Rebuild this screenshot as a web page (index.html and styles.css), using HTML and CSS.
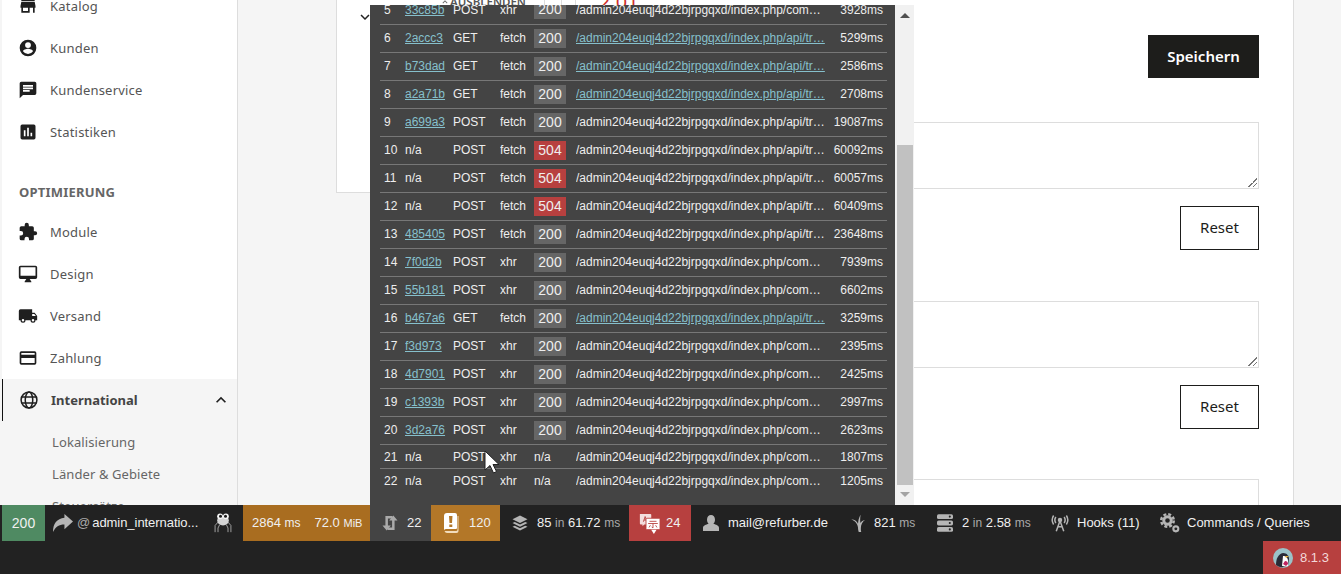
FILE: index.html
```html
<!DOCTYPE html>
<html lang="de">
<head>
<meta charset="utf-8">
<title>Lokalisierung</title>
<link rel="stylesheet" href="styles.css">
</head>
<body>
<div class="layout">
  <aside class="sidebar">
    <ul class="menu">
      <li class="item"><svg class="ic" viewBox="0 0 24 24"><path d="M4 4h16v2H4zM20 7H4l-1 5v2h1v6h10v-6h4v6h2v-6h1v-2zM12 18H6v-4h6z"/></svg>Katalog</li>
      <li class="item"><svg class="ic" viewBox="0 0 24 24"><path d="M12 2a10 10 0 1 0 0 20 10 10 0 0 0 0-20zm0 3a3.500 3.500 0 1 1 0 7 3.500 3.500 0 0 1 0-7zm0 14.200a7.200 7.200 0 0 1-6-3.200c0-2 4-3.100 6-3.100s6 1.100 6 3.100a7.200 7.200 0 0 1-6 3.200z"/></svg>Kunden</li>
      <li class="item"><svg class="ic" viewBox="0 0 24 24"><path d="M20 2H4a2 2 0 0 0-2 2v18l4-4h14a2 2 0 0 0 2-2V4a2 2 0 0 0-2-2zM6 9h12v2H6zm8 5H6v-2h8zm4-6H6V6h12z"/></svg>Kundenservice</li>
      <li class="item"><svg class="ic" viewBox="0 0 24 24"><path d="M19 3H5a2 2 0 0 0-2 2v14a2 2 0 0 0 2 2h14a2 2 0 0 0 2-2V5a2 2 0 0 0-2-2zM9 17H7v-7h2zm4 0h-2V7h2zm4 0h-2v-4h2z"/></svg>Statistiken</li>
      <li class="heading">OPTIMIERUNG</li>
      <li class="item"><svg class="ic" viewBox="0 0 24 24"><path d="M20.500 11H19V7a2 2 0 0 0-2-2h-4V3.500a2.500 2.500 0 0 0-5 0V5H4a2 2 0 0 0-2 2v3.800h1.500a2.700 2.700 0 0 1 0 5.400H2V20a2 2 0 0 0 2 2h3.800v-1.500a2.700 2.700 0 0 1 5.400 0V22H17a2 2 0 0 0 2-2v-4h1.500a2.500 2.500 0 0 0 0-5z"/></svg>Module</li>
      <li class="item"><svg class="ic" viewBox="0 0 24 24"><path d="M21 2H3a2 2 0 0 0-2 2v12a2 2 0 0 0 2 2h7l-2 3v1h8v-1l-2-3h7a2 2 0 0 0 2-2V4a2 2 0 0 0-2-2zm0 12H3V4h18z"/></svg>Design</li>
      <li class="item"><svg class="ic" viewBox="0 0 24 24"><path d="M20 8h-3V4H3a2 2 0 0 0-2 2v11h2a3 3 0 0 0 6 0h6a3 3 0 0 0 6 0h2v-5zM6 18.500a1.500 1.500 0 1 1 0-3 1.500 1.500 0 0 1 0 3zm13.500-9 2 2.500H17V9.500zM18 18.500a1.500 1.500 0 1 1 0-3 1.500 1.500 0 0 1 0 3z"/></svg>Versand</li>
      <li class="item"><svg class="ic" viewBox="0 0 24 24"><path d="M20 4H4a2 2 0 0 0-2 2v12a2 2 0 0 0 2 2h16a2 2 0 0 0 2-2V6a2 2 0 0 0-2-2zm0 14H4v-6h16zm0-10H4V6h16z"/></svg>Zahlung</li>
      <li class="item active"><svg class="ic ic-line" viewBox="0 0 24 24"><circle cx="12" cy="12" r="9.500"/><ellipse cx="12" cy="12" rx="4.500" ry="9.500"/><path d="M3 8.500h18M3 15.500h18"/></svg>International<svg class="caret" viewBox="0 0 24 24"><path d="M7.400 15.400 12 10.800l4.600 4.600L18 14l-6-6-6 6z"/></svg></li>
      <li class="sub">Lokalisierung</li>
      <li class="sub">Länder &amp; Gebiete</li>
      <li class="sub">Steuersätze</li>
    </ul>
  </aside>
  <main class="content">
    <section class="card-left">
      <svg class="chevron" viewBox="0 0 24 24"><path d="M7.400 8.600 12 13.200l4.600-4.600L18 10l-6 6-6-6z"/></svg>
      <div class="peek">
        <svg class="peek-chev" viewBox="0 0 24 24"><path d="M7.400 15.400 12 10.800l4.600 4.600L18 14l-6-6-6 6z"/></svg>
        <span class="hide-label">AUSBLENDEN</span>
        <span class="peek-box"></span>
        <span class="peek-red">2.01</span>
      </div>
    </section>
    <section class="card-right">
      <button class="save">Speichern</button>
      <div class="field first"></div>
      <button class="reset">Reset</button>
      <div class="field second"></div>
      <button class="reset">Reset</button>
      <div class="field third"></div>
    </section>
  </main>
</div>

<div class="ajax-panel">
  <div class="ajax-scroll">
    <table class="ajax-table">
      <tr><td class="n">5</td><td class="id"><a>33c85b</a></td><td class="m">POST</td><td class="t">xhr</td><td class="s"><span class="st">200</span></td><td class="u">/admin204euqj4d22bjrpgqxd/index.php/com…</td><td class="ms">3928ms</td></tr>
      <tr><td class="n">6</td><td class="id"><a>2accc3</a></td><td class="m">GET</td><td class="t">fetch</td><td class="s"><span class="st">200</span></td><td class="u"><a>/admin204euqj4d22bjrpgqxd/index.php/api/tr…</a></td><td class="ms">5299ms</td></tr>
      <tr><td class="n">7</td><td class="id"><a>b73dad</a></td><td class="m">GET</td><td class="t">fetch</td><td class="s"><span class="st">200</span></td><td class="u"><a>/admin204euqj4d22bjrpgqxd/index.php/api/tr…</a></td><td class="ms">2586ms</td></tr>
      <tr><td class="n">8</td><td class="id"><a>a2a71b</a></td><td class="m">GET</td><td class="t">fetch</td><td class="s"><span class="st">200</span></td><td class="u"><a>/admin204euqj4d22bjrpgqxd/index.php/api/tr…</a></td><td class="ms">2708ms</td></tr>
      <tr><td class="n">9</td><td class="id"><a>a699a3</a></td><td class="m">POST</td><td class="t">fetch</td><td class="s"><span class="st">200</span></td><td class="u">/admin204euqj4d22bjrpgqxd/index.php/api/tr…</td><td class="ms">19087ms</td></tr>
      <tr><td class="n">10</td><td class="id">n/a</td><td class="m">POST</td><td class="t">fetch</td><td class="s"><span class="st err">504</span></td><td class="u">/admin204euqj4d22bjrpgqxd/index.php/api/tr…</td><td class="ms">60092ms</td></tr>
      <tr><td class="n">11</td><td class="id">n/a</td><td class="m">POST</td><td class="t">fetch</td><td class="s"><span class="st err">504</span></td><td class="u">/admin204euqj4d22bjrpgqxd/index.php/api/tr…</td><td class="ms">60057ms</td></tr>
      <tr><td class="n">12</td><td class="id">n/a</td><td class="m">POST</td><td class="t">fetch</td><td class="s"><span class="st err">504</span></td><td class="u">/admin204euqj4d22bjrpgqxd/index.php/api/tr…</td><td class="ms">60409ms</td></tr>
      <tr><td class="n">13</td><td class="id"><a>485405</a></td><td class="m">POST</td><td class="t">fetch</td><td class="s"><span class="st">200</span></td><td class="u">/admin204euqj4d22bjrpgqxd/index.php/api/tr…</td><td class="ms">23648ms</td></tr>
      <tr><td class="n">14</td><td class="id"><a>7f0d2b</a></td><td class="m">POST</td><td class="t">xhr</td><td class="s"><span class="st">200</span></td><td class="u">/admin204euqj4d22bjrpgqxd/index.php/com…</td><td class="ms">7939ms</td></tr>
      <tr><td class="n">15</td><td class="id"><a>55b181</a></td><td class="m">POST</td><td class="t">xhr</td><td class="s"><span class="st">200</span></td><td class="u">/admin204euqj4d22bjrpgqxd/index.php/com…</td><td class="ms">6602ms</td></tr>
      <tr><td class="n">16</td><td class="id"><a>b467a6</a></td><td class="m">GET</td><td class="t">fetch</td><td class="s"><span class="st">200</span></td><td class="u"><a>/admin204euqj4d22bjrpgqxd/index.php/api/tr…</a></td><td class="ms">3259ms</td></tr>
      <tr><td class="n">17</td><td class="id"><a>f3d973</a></td><td class="m">POST</td><td class="t">xhr</td><td class="s"><span class="st">200</span></td><td class="u">/admin204euqj4d22bjrpgqxd/index.php/com…</td><td class="ms">2395ms</td></tr>
      <tr><td class="n">18</td><td class="id"><a>4d7901</a></td><td class="m">POST</td><td class="t">xhr</td><td class="s"><span class="st">200</span></td><td class="u">/admin204euqj4d22bjrpgqxd/index.php/com…</td><td class="ms">2425ms</td></tr>
      <tr><td class="n">19</td><td class="id"><a>c1393b</a></td><td class="m">POST</td><td class="t">xhr</td><td class="s"><span class="st">200</span></td><td class="u">/admin204euqj4d22bjrpgqxd/index.php/com…</td><td class="ms">2997ms</td></tr>
      <tr><td class="n">20</td><td class="id"><a>3d2a76</a></td><td class="m">POST</td><td class="t">xhr</td><td class="s"><span class="st">200</span></td><td class="u">/admin204euqj4d22bjrpgqxd/index.php/com…</td><td class="ms">2623ms</td></tr>
      <tr class="short"><td class="n">21</td><td class="id">n/a</td><td class="m">POST</td><td class="t">xhr</td><td class="s">n/a</td><td class="u">/admin204euqj4d22bjrpgqxd/index.php/com…</td><td class="ms">1807ms</td></tr>
      <tr class="short"><td class="n">22</td><td class="id">n/a</td><td class="m">POST</td><td class="t">xhr</td><td class="s">n/a</td><td class="u">/admin204euqj4d22bjrpgqxd/index.php/com…</td><td class="ms">1205ms</td></tr>
    </table>
  </div>
  <div class="scrollbar">
    <span class="arrow up"></span>
    <span class="track"><span class="thumb"></span></span>
    <span class="arrow down"></span>
  </div>
</div>

<svg class="cursor" viewBox="0 0 16 24"><path d="M1 1v19l5-4.500 3.500 7.500 3-1.500-3.500-7H15z" fill="#fff" stroke="#222" stroke-width="1"/></svg>

<footer class="debug">
  <div class="bar">
    <div class="cell status">200</div>
    <div class="cell route">
      <svg class="route-ic" viewBox="2 2 21 21"><path d="M14 3l9 8-9 8v-5C8 14 5 16 2 22 2 13 6 8 14 7z"/></svg>
      <span class="at">@</span><span class="route-name">admin_internatio...</span>
      <svg class="frog-ic" viewBox="0 0 24 26" fill="none" stroke="#b8b8b8" stroke-width="1"><path d="M6 12 2.500 16v8M18 12l3.500 4v8M8 15l-2 4v5M16 15l2 4v5"/><ellipse cx="12" cy="10" rx="7" ry="6" fill="#d4d4d4" stroke="none"/><circle cx="8.500" cy="5" r="3.500" fill="#f4f4f4" stroke="none"/><circle cx="15.500" cy="5" r="3.500" fill="#f4f4f4" stroke="none"/><circle cx="9" cy="5" r="1.800" fill="#1a1a1a" stroke="none"/><circle cx="15" cy="5" r="1.800" fill="#1a1a1a" stroke="none"/></svg>
    </div>
    <div class="cell perf"><span>2864 <small>ms</small></span><span>72.0 <small class="unit">MiB</small></span></div>
    <div class="cell ajax">
      <svg class="loop-ic" viewBox="0 0 20 24" fill="none" stroke="#aaa" stroke-width="3"><path d="M13 5H6v11M7 19h7V8"/><path d="M1 15h10l-5 6zM9 9h10l-5-6z" fill="#aaa" stroke="none"/></svg>
      <span>22</span>
    </div>
    <div class="cell logs">
      <svg class="book-ic" viewBox="0 0 16 20"><path d="M1 3a3 3 0 0 1 3-3h8a2 2 0 0 1 2 2v13a1 1 0 0 1-1 1H4a3 3 0 0 0-3 1z" fill="#fff"/><path d="M15.500 3v15a2 2 0 0 1-2 2H4a3 3 0 0 1-2.500-2H13a1.500 1.500 0 0 0 1.500-1.500V3z" fill="#f2dcbc"/><path d="M6 3h3.500L9 10H6.500zM6.300 11.500h3V14h-3z" fill="#b37728"/></svg>
      <span>120</span>
    </div>
    <div class="cell db">
      <svg class="b-ic" viewBox="0 0 24 24"><path d="M12 2 2 7l10 5 10-5z" fill="#b5b5b5"/><path d="M2 12l3-1.500 7 3.500 7-3.500 3 1.500-10 5z" fill="#b5b5b5"/><path d="M2 17l3-1.500 7 3.500 7-3.500 3 1.500-10 5z" fill="#b5b5b5"/></svg>
      <span>85 <em>in</em> 61.72 <em>ms</em></span>
    </div>
    <div class="cell trans">
      <svg class="trans-ic" viewBox="0 0 24 24"><path d="M1 1h12a1 1 0 0 1 1 1v11H6l-2 2v-2H2a1 1 0 0 1-1-1z" fill="#f3dddd"/><path d="M5 10l2-6 2 6M5.700 8h2.600" stroke="#b7403f" fill="none"/><rect x="8" y="6" width="16" height="13" rx="1" fill="#fff" stroke="#b7403f"/><path d="M14 19h6l-3 5z" fill="#fff"/><path d="M12 9.500h8M10.500 12h11M16 12v5l-1.500-1M13 14l-1.500 2.500M19 14l1.500 2.500" stroke="#b7403f" fill="none"/></svg>
      <span>24</span>
    </div>
    <div class="cell user">
      <svg class="small-ic" viewBox="0 0 20 22"><path d="M10 1c3 0 5 2.500 5 6 0 2.500-1 4-2 5 3 1 7 2 7 5v4H0v-4c0-3 4-4 7-5-1-1-2-2.500-2-5 0-3.500 2-6 5-6z" fill="#b5b5b5"/></svg>
      <span>mail@refurber.de</span>
    </div>
    <div class="cell twig">
      <svg class="small-ic" viewBox="0 0 20 24"><path d="M11 24c-.5-2-1-3-1-6C9.500 13 6 9 1 7c5 .5 8 3 9 6 .3-4 1-8 3.500-12-.8 5-.8 8-.2 11 1-2 3-3.500 6-4-3.500 2.500-5.500 6-5.500 11 0 2 0 3 .5 5z" fill="#b5b5b5"/></svg>
      <span>821 <em>ms</em></span>
    </div>
    <div class="cell cache">
      <svg class="small-ic" viewBox="0 0 20 22"><rect x="0" y="0" width="20" height="6" rx="2" fill="#b5b5b5"/><rect x="0" y="8" width="20" height="6" rx="2" fill="#b5b5b5"/><rect x="0" y="16" width="20" height="6" rx="2" fill="#b5b5b5"/><circle cx="16" cy="3" r="1.300" fill="#222"/><circle cx="16" cy="11" r="1.300" fill="#222"/><circle cx="16" cy="19" r="1.300" fill="#222"/></svg>
      <span>2 <em>in</em> 2.58 <em>ms</em></span>
    </div>
    <div class="cell hooks">
      <svg class="b-ic" viewBox="0 0 24 24" fill="none" stroke="#b5b5b5" stroke-width="2"><circle cx="12" cy="8" r="2" fill="#b5b5b5"/><path d="M12 9 7 23M12 9l5 14M8.500 17h7M6.500 4a7 7 0 0 0 0 8M17.500 4a7 7 0 0 1 0 8M3.500 2a11 11 0 0 0 0 12M20.500 2a11 11 0 0 1 0 12"/></svg>
      <span>Hooks (11)</span>
    </div>
    <div class="cell cqrs">
      <svg class="gear-ic" viewBox="0 0 24 24" fill="none" stroke="#b5b5b5"><circle cx="9" cy="9" r="7.500" stroke-width="3" stroke-dasharray="3.500 2.390"/><circle cx="9" cy="9" r="4.500" stroke-width="3.500"/><circle cx="19" cy="19" r="3" stroke-width="2.500"/></svg>
      <span>Commands / Queries</span>
    </div>
  </div>
  <div class="lower">
    <div class="version">
      <svg class="logo" viewBox="0 0 20 20"><circle cx="10" cy="10" r="10" fill="#9bc2c8"/><path d="M3 17c0-6 2-11 7-12 4 0 6 3 6 6l-1 6a10 10 0 0 1-12 0z" fill="#2a2a36"/><path d="M10 8c3 0 5 2 5 5v5a10 10 0 0 1-6 0z" fill="#fff"/><path d="M12 8h4l-3 2z" fill="#e8b33f"/><path d="M12 13c2 0 3 1 3 3l-2 2-3-2z" fill="#c0245f"/></svg>
      <span>8.1.3</span>
    </div>
  </div>
</footer>
</body>
</html>
```
FILE: styles.css
```css
* { box-sizing: border-box; }
html, body { margin: 0; height: 100%; }
body {
  position: relative;
  width: 1341px;
  height: 574px;
  overflow: hidden;
  background: #f5f5f5;
  font-family: "Noto Sans", "Open Sans", sans-serif;
  color: #333;
}

/* page underneath */
.layout { display: flex; height: 574px; padding-left: 2px; }
.sidebar {
  width: 236px;
  height: 505px;
  flex: none;
  overflow: hidden;
  background: #fff;
  border-right: 1px solid #ddd;
}
.menu { list-style: none; margin: -15px 0 0; padding: 0; }
.item {
  display: flex;
  align-items: center;
  height: 42px;
  padding-left: 16px;
  font-size: 13px;
  letter-spacing: .2px;
  color: #555;
}
.ic { width: 20px; height: 20px; margin-right: 12px; flex: none; fill: #1f1f1f; }
.ic-line { fill: none; stroke: #1f1f1f; stroke-width: 1.8; }
.heading {
  height: 58px;
  padding: 30px 0 0 17px;
  font-size: 13px;
  line-height: 18px;
  font-weight: 700;
  letter-spacing: .2px;
  color: #666;
}
.active {
  background: #f5f5f5;
  border-left: 1px solid #111;
  padding-left: 16px;
  font-weight: 700;
  letter-spacing: 0;
  color: #444;
}
.caret { width: 20px; height: 20px; margin-left: auto; margin-right: 6px; fill: #1f1f1f; }
.sub { height: 32px; padding-left: 50px; background: #f5f5f5; font-size: 13px; line-height: 32px; letter-spacing: .1px; color: #666; }
.active + .sub { height: 37px; padding-top: 5px; }

.content { flex: 1; display: flex; padding-left: 98px; align-items: flex-start; }
.card-left {
  position: relative;
  width: 240px;
  height: 193px;
  flex: none;
  background: #fff;
  border: 1px solid #ddd;
  border-top: 0;
}
.chevron { position: absolute; left: 19px; top: 8px; width: 18px; height: 18px; fill: #222; }
.peek { position: absolute; left: 103px; top: -5px; display: flex; align-items: center; height: 14px; white-space: nowrap; }
.peek-chev { width: 10px; height: 10px; flex: none; fill: #666; }
.hide-label { font-size: 11.5px; line-height: 14px; font-weight: 600; color: #555; }
.peek-box { width: 18px; height: 14px; margin-left: 18px; flex: none; border: 1px solid #ddd; background: #fff; }
.peek-red { margin-left: 37px; font-size: 20px; line-height: 14px; color: #d0312d; }
.card-right {
  width: 718px;
  height: 505px;
  flex: none;
  overflow: hidden;
  background: #fff;
  border-right: 1px solid #ddd;
  padding: 35px 34px 0 0;
  display: flex;
  flex-direction: column;
  align-items: flex-end;
}
.save {
  width: 111px;
  height: 43px;
  flex: none;
  padding: 0 0 2px;
  border: 0;
  background: #1d1d1b;
  color: #fff;
  font: 600 15px "Noto Sans", sans-serif;
}
.field { width: 600px; height: 67px; flex: none; border: 1px solid #ddd; background: #fff; position: relative; }
.first { margin-top: 44px; }
.second { margin-top: 51px; }
.third { margin-top: 50px; }
.first::after, .second::after {
  content: "";
  position: absolute;
  right: 1px;
  bottom: 1px;
  width: 9px;
  height: 9px;
  background: linear-gradient(135deg, transparent 50%, #777 50%, #777 58%, transparent 58%, transparent 75%, #777 75%, #777 83%, transparent 83%);
}
.reset {
  width: 79px;
  height: 44px;
  flex: none;
  padding: 0 0 2px;
  margin-top: 17px;
  border: 1px solid #1d1d1b;
  background: #fff;
  color: #1d1d1b;
  font: 400 15px "Noto Sans", sans-serif;
}

/* ajax overlay */
.ajax-panel {
  position: absolute;
  left: 370px;
  top: 5px;
  width: 544px;
  height: 500px;
  display: flex;
  background: #444;
}
.ajax-scroll { width: 525px; height: 500px; overflow: hidden; padding: 0 8px 0 10px; }
.ajax-table {
  border-collapse: collapse;
  table-layout: fixed;
  width: 507px;
  margin-top: -9px;
  font: 12px/16px "Liberation Sans", Arial, sans-serif;
  color: #eee;
}
.ajax-table tr { height: 28px; border-bottom: 1px solid #777; }
.ajax-table tr.short { height: 24px; }
.ajax-table tr:last-child { border-bottom: 0; }
.ajax-table td { padding: 0; white-space: nowrap; overflow: hidden; }
.ajax-table .short td { padding-top: 1px; }
.ajax-table a { color: #86c0cc; text-decoration: underline; }
.ajax-table .n { width: 25px; padding-left: 4px; }
.id { width: 48px; }
.m { width: 47px; }
.t { width: 34px; }
.s { width: 42px; }
.u { width: 256px; }
.ajax-table .ms { width: 55px; padding-right: 4px; text-align: right; }
.st {
  display: block;
  width: 32px;
  height: 19px;
  background: #666;
  font-size: 14px;
  line-height: 19px;
  text-align: center;
}
.st.err { background: #b7403f; }
.scrollbar {
  width: 19px;
  height: 500px;
  background: #f1f1f1;
  display: flex;
  flex-direction: column;
  align-items: center;
}
.arrow { width: 0; height: 0; flex: none; border-left: 5px solid transparent; border-right: 5px solid transparent; }
.up { margin: 8px 0 7px; border-bottom: 5px solid #505050; }
.down { margin: 7px 0 8px; border-top: 5px solid #a3a3a3; }
.track { flex: 1; width: 16px; display: flex; flex-direction: column; justify-content: flex-end; }
.thumb { display: block; height: 340px; background: #c1c1c1; }
.cursor { position: absolute; left: 484px; top: 450px; width: 16px; height: 24px; }

/* debug toolbar */
.debug {
  position: absolute;
  left: 0;
  right: 0;
  bottom: 0;
  height: 69px;
  background: #222;
  font: 13px/36px "Liberation Sans", Arial, sans-serif;
  color: #f0f0f0;
}
.bar { display: flex; height: 36px; padding-left: 2px; }
.cell { display: flex; align-items: center; flex: none; height: 36px; white-space: nowrap; }
.b-ic { width: 18px; height: 18px; flex: none; }
.small-ic { width: 16px; height: 18px; flex: none; }
.cell em, .cell small { font-style: normal; font-size: 12px; color: #aaa; }
.status { width: 43px; justify-content: center; background: #4f8a62; font-size: 14px; }
.route { width: 198px; padding-left: 8px; }
.route-ic { width: 20px; height: 20px; flex: none; fill: #b5b5b5; }
.at { margin-left: 4px; color: #aaa; }
.route-name { margin-left: 2px; letter-spacing: -.05px; }
.frog-ic { width: 20px; height: 22px; flex: none; margin-left: auto; margin-right: 10px; }
.perf { width: 127px; background: #a96d20; padding-left: 9px; gap: 14px; }
.cell.perf small { color: #f0f0f0; }
.cell.perf .unit { font-size: 11px; }
.ajax { width: 61px; padding-left: 11px; gap: 8px; background: #444; }
.loop-ic { width: 18px; height: 20px; flex: none; }
.logs { width: 69px; padding-left: 12px; gap: 10px; background: #b37728; }
.book-ic { width: 16px; height: 20px; flex: none; }
.db { width: 129px; padding-left: 11px; gap: 8px; }
.trans { width: 62px; padding-left: 10px; gap: 6px; background: #b7403f; }
.trans-ic { width: 21px; height: 21px; flex: none; }
.user { width: 150px; padding-left: 12px; gap: 9px; }
.twig { width: 87px; padding-left: 9px; gap: 8px; }
.cache { width: 114px; padding-left: 9px; gap: 9px; }
.hooks { width: 109px; padding-left: 9px; gap: 8px; }
.cqrs { padding-left: 9px; gap: 7px; }
.gear-ic { width: 20px; height: 20px; flex: none; }
.lower { display: flex; justify-content: flex-end; height: 33px; }
.version {
  width: 78px;
  display: flex;
  align-items: center;
  gap: 7px;
  padding-left: 10px;
  background: #b7403f;
  line-height: 33px;
  color: #f3d9d9;
}
.logo { width: 20px; height: 20px; flex: none; }
```
